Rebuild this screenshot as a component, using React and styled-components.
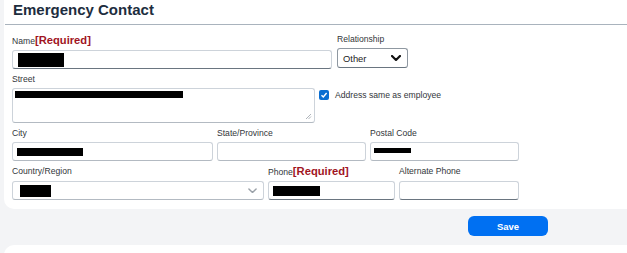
import React from "react";
import styled, { createGlobalStyle } from "styled-components";

const Global = createGlobalStyle`
  html, body { margin: 0; padding: 0; background: #f3f4f6; overflow: hidden; }
  body { font-family: "Liberation Sans", Arial, sans-serif; color: #32363a; }
  * { box-sizing: border-box; }
`;

const Page = styled.div`
  width: 627px;
  height: 253px;
  padding-left: 4px;
  overflow: hidden;
`;

const Card = styled.section`
  width: 640px;
  background: #fff;
  border-radius: 0 0 10px 10px;
  padding-bottom: 9px;
`;

const Header = styled.h2`
  margin: 0;
  height: 25px;
  padding: 0 0 0 8px;
  font-size: 15px;
  line-height: 20px;
  font-weight: 700;
  color: #1d2d3e;
  border-bottom: 1px solid #a9b3bd;
  margin-left: 1px;
`;

const Form = styled.div`
  padding: 8px 0 0 8px;
  display: flex;
  flex-direction: column;
`;

const Row = styled.div`
  display: flex;
  align-items: flex-start;
  gap: ${(p) => p.$gap ?? 4}px;
  margin-top: ${(p) => p.$mt ?? 0}px;
`;

const Field = styled.div`
  display: flex;
  flex-direction: column;
  width: ${(p) => p.$w}px;
  margin-top: ${(p) => p.$mt ?? 0}px;
`;

const Label = styled.label`
  font-size: 8.6px;
  line-height: ${(p) => (p.$tall ? 15 : 13)}px;
  height: ${(p) => (p.$tall ? 15 : 13)}px;
  color: #32363a;
  margin-bottom: 2px;
  white-space: nowrap;
`;

const Req = styled.span`
  font-size: 11.2px;
  font-weight: 700;
  color: #a0141e;
`;

const Box = styled.div`
  position: relative;
  height: ${(p) => p.$h ?? 19}px;
  border: 1px solid #cdd3da;
  border-bottom-color: ${(p) => (p.$dark ? "#6a7580" : "#b3bac2")};
  border-radius: 3px;
  background: #fff;
  display: flex;
  align-items: ${(p) => (p.$top ? "flex-start" : "center")};
  padding-left: ${(p) => p.$pl ?? 5}px;
  padding-top: ${(p) => p.$pt ?? 0}px;
`;

const SelectBox = styled(Box)`
  justify-content: space-between;
  padding-right: 6px;
  border-color: ${(p) => (p.$strong ? "#8f98a1" : "#cdd3da")};
  border-bottom-color: ${(p) => (p.$strong ? "#6a7580" : "#b3bac2")};
`;

const SelectText = styled.span`
  font-size: 9.4px;
  color: #222;
`;

const Redact = styled.span`
  display: block;
  width: ${(p) => p.$w}px;
  height: ${(p) => p.$h}px;
  background: #000;
  margin-top: ${(p) => p.$mt ?? 0}px;
`;

const Grip = styled.svg`
  position: absolute;
  right: 2px;
  bottom: 2px;
`;

const CheckRow = styled.div`
  display: flex;
  align-items: center;
  gap: 6px;
  margin-top: 17px;
  font-size: 8.6px;
  color: #32363a;
`;

const CheckBox = styled.span`
  width: 10px;
  height: 10px;
  border-radius: 2px;
  background: #0a6ed1;
  display: flex;
  align-items: center;
  justify-content: center;
`;

const Footer = styled.div`
  display: flex;
  padding-left: 464px;
  margin-top: 7px;
`;

const SaveButton = styled.button`
  width: 80px;
  height: 20px;
  border: none;
  border-radius: 6px;
  background: #0070f2;
  color: #fff;
  font-family: "Liberation Sans", Arial, sans-serif;
  font-size: 9.5px;
  font-weight: 700;
  padding: 0;
`;

const NextCard = styled.div`
  width: 640px;
  height: 10px;
  margin-top: 9px;
  background: #fff;
  border-radius: 10px 10px 0 0;
`;

const Chevron = ({ color = "#111", w = 10, sw = 2 }) => (
  <svg width={w} height={w * 0.6} viewBox="0 0 10 6">
    <path d="M1 1 L5 5 L9 1" fill="none" stroke={color} strokeWidth={sw} strokeLinecap="round" strokeLinejoin="round" />
  </svg>
);

export default function App() {
  return (
    <>
      <Global />
      <Page>
        <Card>
          <Header>Emergency Contact</Header>
          <Form>
            <Row $gap={5}>
              <Field $w={320}>
                <Label $tall>
                  Name<Req>[Required]</Req>
                </Label>
                <Box $dark $pl={5}>
                  <Redact $w={46} $h={14} />
                </Box>
              </Field>
              <Field $w={71}>
                <Label>Relationship</Label>
                <SelectBox $strong $h={20} $pl={5}>
                  <SelectText>Other</SelectText>
                  <Chevron color="#111" w={10} sw={2.2} />
                </SelectBox>
              </Field>
            </Row>
            <Row $gap={4} $mt={4}>
              <Field $w={303}>
                <Label>Street</Label>
                <Box $h={35} $top $pl={2} $pt={2}>
                  <Redact $w={168} $h={7} />
                  <Grip width="7" height="7" viewBox="0 0 7 7">
                    <path d="M6 1 L1 6 M6 3.5 L3.5 6" stroke="#9aa1a8" strokeWidth="0.8" />
                  </Grip>
                </Box>
              </Field>
              <CheckRow>
                <CheckBox>
                  <svg width="8" height="8" viewBox="0 0 8 8">
                    <path d="M1.5 4.2 L3.3 6 L6.6 2" fill="none" stroke="#fff" strokeWidth="1.4" />
                  </svg>
                </CheckBox>
                <span>Address same as employee</span>
              </CheckRow>
            </Row>
            <Row $gap={4} $mt={4}>
              <Field $w={201}>
                <Label>City</Label>
                <Box $pl={4}>
                  <Redact $w={66} $h={8} />
                </Box>
              </Field>
              <Field $w={149}>
                <Label>State/Province</Label>
                <Box />
              </Field>
              <Field $w={149}>
                <Label>Postal Code</Label>
                <Box $pl={3}>
                  <Redact $w={37} $h={5} $mt={-3} />
                </Box>
              </Field>
            </Row>
            <Row $gap={4} $mt={3}>
              <Field $w={252}>
                <Label $tall>Country/Region</Label>
                <SelectBox $pl={7}>
                  <Redact $w={31} $h={12} />
                  <Chevron color="#9aa1a8" w={9} sw={1.6} />
                </SelectBox>
              </Field>
              <Field $w={127}>
                <Label $tall>
                  Phone<Req>[Required]</Req>
                </Label>
                <Box $dark $pl={4}>
                  <Redact $w={47} $h={10} />
                </Box>
              </Field>
              <Field $w={120}>
                <Label $tall>Alternate Phone</Label>
                <Box $dark />
              </Field>
            </Row>
          </Form>
        </Card>
        <Footer>
          <SaveButton>Save</SaveButton>
        </Footer>
        <NextCard />
      </Page>
    </>
  );
}
